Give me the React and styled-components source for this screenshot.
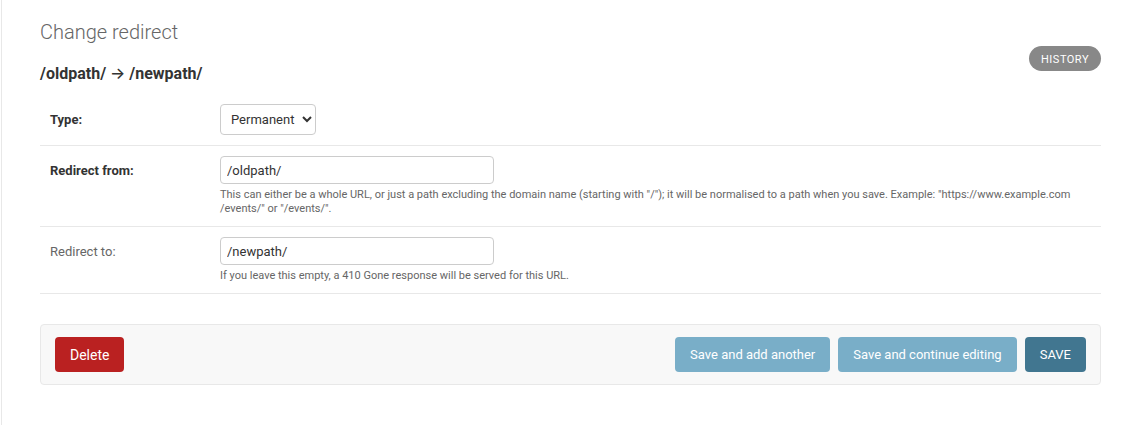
import React from "react";
import styled, { createGlobalStyle } from "styled-components";

const GlobalStyle = createGlobalStyle`
  html, body { margin: 0; padding: 0; background: #fff; }
  body {
    font-family: Roboto, "Liberation Sans", sans-serif;
    font-size: 14px;
    color: #333;
  }
  * { box-sizing: border-box; }
`;

const Page = styled.div`
  margin-left: 1px;
  border-left: 1px solid #e8e8e8;
  min-height: 425px;
  padding: 20px 40px 20px 38px;
`;

const Header = styled.div`
  display: flex;
  justify-content: space-between;
  align-items: flex-start;
`;

const TitleBlock = styled.div`
  display: flex;
  flex-direction: column;
`;

const Title = styled.h1`
  margin: 0 0 20px;
  font-size: 20px;
  font-weight: 300;
  color: #666;
`;

const Subtitle = styled.h2`
  margin: 0;
  height: 19px;
  font-size: 16px;
  line-height: 19px;
  font-weight: 700;
  color: #333;
`;

const Arrow = styled.span`
  font-family: Inter, "DejaVu Sans", sans-serif;
  font-weight: 500;
  font-size: 16px;
  line-height: 1;
`;

const ToolButton = styled.a`
  display: block;
  margin-top: 26px;
  height: 25px;
  line-height: 20px;
  padding: 4px 12px 1px;
  background: #888;
  color: #fff;
  font-size: 11px;
  font-weight: 400;
  text-transform: uppercase;
  letter-spacing: 0.5px;
  border-radius: 15px;
  text-decoration: none;
`;

const Fieldset = styled.div`
  margin-top: 10px;
  display: flex;
  flex-direction: column;
`;

const Row = styled.div`
  padding: 10px;
  border-bottom: 1px solid #e8e8e8;
`;

const Field = styled.div`
  display: flex;
  align-items: center;
  min-height: ${(p) => p.$minHeight || 0}px;
`;

const Label = styled.label`
  flex: 0 0 160px;
  margin-right: 10px;
  font-size: 13px;
  font-weight: ${(p) => (p.$required ? 700 : 400)};
  color: ${(p) => (p.$required ? "#333" : "#666")};
`;

const Select = styled.select`
  height: 31px;
  padding: 5px 4px 5px 6px;
  font-family: Roboto, "Liberation Sans", sans-serif;
  font-size: 13px;
  color: #333;
  background: #fff;
  border: 1px solid #ccc;
  border-radius: 4px;
`;

const TextInput = styled.input`
  width: 274px;
  height: 28px;
  padding: 5px 6px;
  font-family: Roboto, "Liberation Sans", sans-serif;
  font-size: 13px;
  color: #333;
  background: #fff;
  border: 1px solid #ccc;
  border-radius: 4px;
  outline: none;
`;

const Help = styled.div`
  margin: 4px 0 0 170px;
  font-size: 11px;
  line-height: 14px;
  color: #666;
`;

const SubmitRow = styled.div`
  margin-top: 30px;
  display: flex;
  align-items: center;
  gap: 8px;
  padding: 12px 14px;
  background: #f8f8f8;
  border: 1px solid #e8e8e8;
  border-radius: 4px;
`;

const Button = styled.a`
  display: inline-flex;
  align-items: center;
  height: 35px;
  padding: 0 15px;
  font-size: ${(p) => (p.$variant === "danger" ? 14 : 13)}px;
  color: #fff;
  border-radius: 4px;
  text-decoration: none;
  background: ${(p) =>
    p.$variant === "danger" ? "#ba2121" : p.$variant === "primary" ? "#417690" : "#79aec8"};
  margin-right: ${(p) => (p.$pushLeft ? "auto" : "0")};
`;

export default function App() {
  return (
    <>
      <GlobalStyle />
      <Page>
        <Header>
          <TitleBlock>
            <Title>Change redirect</Title>
            <Subtitle>
              /oldpath/ <Arrow>→</Arrow> /newpath/
            </Subtitle>
          </TitleBlock>
          <ToolButton href="#">History</ToolButton>
        </Header>

        <Fieldset>
          <Row>
            <Field $minHeight={32}>
              <Label $required>Type:</Label>
              <Select defaultValue="permanent">
                <option value="permanent">Permanent</option>
                <option value="temporary">Temporary</option>
              </Select>
            </Field>
          </Row>
          <Row>
            <Field>
              <Label $required>Redirect from:</Label>
              <TextInput defaultValue="/oldpath/" />
            </Field>
            <Help>
              This can either be a whole URL, or just a path excluding the domain name (starting with "/"); it will be
              normalised to a path when you save. Example: "https://www.example.com
              <br />
              /events/" or "/events/".
            </Help>
          </Row>
          <Row>
            <Field>
              <Label>Redirect to:</Label>
              <TextInput defaultValue="/newpath/" />
            </Field>
            <Help>If you leave this empty, a 410 Gone response will be served for this URL.</Help>
          </Row>
        </Fieldset>

        <SubmitRow>
          <Button href="#" $variant="danger" $pushLeft>
            Delete
          </Button>
          <Button href="#">Save and add another</Button>
          <Button href="#">Save and continue editing</Button>
          <Button href="#" $variant="primary">
            SAVE
          </Button>
        </SubmitRow>
      </Page>
    </>
  );
}
